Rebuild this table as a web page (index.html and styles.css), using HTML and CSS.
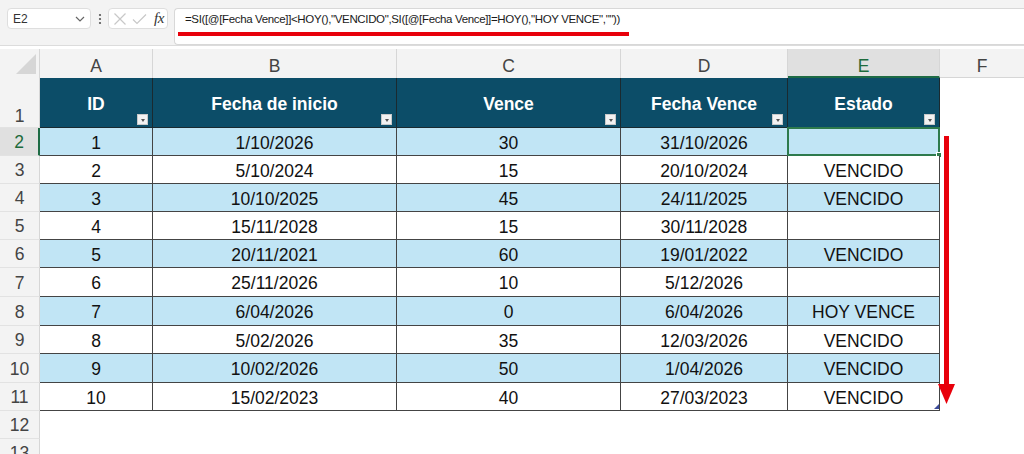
FILE: index.html
```html
<!DOCTYPE html>
<html lang="es">
<head>
<meta charset="utf-8">
<title>Hoja</title>
<link rel="stylesheet" href="styles.css">
</head>
<body>
<div class="app">
  <div class="topbar">
    <div class="namebox">
      <span class="nb-text">E2</span>
      <svg class="chev" width="10" height="6" viewBox="0 0 10 6"><path d="M1 1 L5 5 L9 1" fill="none" stroke="#666" stroke-width="1.2"/></svg>
    </div>
    <svg class="dots" width="4" height="12" viewBox="0 0 4 12"><circle cx="2" cy="2" r="1.1" fill="#555"/><circle cx="2" cy="6" r="1.1" fill="#555"/><circle cx="2" cy="10" r="1.1" fill="#555"/></svg>
    <div class="fxbox">
      <svg width="14" height="14" viewBox="0 0 14 14"><path d="M1.5 1.5 L12.5 12.5 M12.5 1.5 L1.5 12.5" stroke="#c8c8c8" stroke-width="1.2" fill="none"/></svg>
      <svg width="15" height="14" viewBox="0 0 15 14"><path d="M1 7.5 L5 11.5 L14 2.5" stroke="#c8c8c8" stroke-width="1.2" fill="none"/></svg>
      <span class="fx">fx</span>
    </div>
    <div class="formula">
      <div class="ftext">=SI([@[Fecha Vence]]&lt;HOY(),"VENCIDO",SI([@[Fecha Vence]]=HOY(),"HOY VENCE",""))</div>
      <div class="redline"></div>
    </div>
  </div>

  <div class="sheet">
    <!-- column headers -->
    <div class="corner"><svg width="22" height="22" viewBox="0 0 22 22"><path d="M21 1 L21 21 L1 21 Z" fill="#d6d6d6"/></svg></div>
    <div class="colh">A</div>
    <div class="colh">B</div>
    <div class="colh">C</div>
    <div class="colh">D</div>
    <div class="colh sel">E</div>
    <div class="colh last">F</div>

    <!-- row 1: table header -->
    <div class="rowh tall">1</div>
    <div class="th">ID<span class="filt"></span></div>
    <div class="th">Fecha de inicio<span class="filt"></span></div>
    <div class="th">Vence<span class="filt"></span></div>
    <div class="th">Fecha Vence<span class="filt"></span></div>
    <div class="th">Estado<span class="filt"></span></div>
    <div class="blank"></div>

    <div class="rowh sel">2</div>
    <div class="td band">1</div><div class="td band">1/10/2026</div><div class="td band">30</div><div class="td band">31/10/2026</div><div class="td band active"><span class="handle"></span></div><div class="blank"></div>

    <div class="rowh">3</div>
    <div class="td">2</div><div class="td">5/10/2024</div><div class="td">15</div><div class="td">20/10/2024</div><div class="td">VENCIDO</div><div class="blank"></div>

    <div class="rowh">4</div>
    <div class="td band">3</div><div class="td band">10/10/2025</div><div class="td band">45</div><div class="td band">24/11/2025</div><div class="td band">VENCIDO</div><div class="blank"></div>

    <div class="rowh">5</div>
    <div class="td">4</div><div class="td">15/11/2028</div><div class="td">15</div><div class="td">30/11/2028</div><div class="td"></div><div class="blank"></div>

    <div class="rowh">6</div>
    <div class="td band">5</div><div class="td band">20/11/2021</div><div class="td band">60</div><div class="td band">19/01/2022</div><div class="td band">VENCIDO</div><div class="blank"></div>

    <div class="rowh">7</div>
    <div class="td">6</div><div class="td">25/11/2026</div><div class="td">10</div><div class="td">5/12/2026</div><div class="td"></div><div class="blank"></div>

    <div class="rowh">8</div>
    <div class="td band">7</div><div class="td band">6/04/2026</div><div class="td band">0</div><div class="td band">6/04/2026</div><div class="td band">HOY VENCE</div><div class="blank"></div>

    <div class="rowh">9</div>
    <div class="td">8</div><div class="td">5/02/2026</div><div class="td">35</div><div class="td">12/03/2026</div><div class="td">VENCIDO</div><div class="blank"></div>

    <div class="rowh">10</div>
    <div class="td band">9</div><div class="td band">10/02/2026</div><div class="td band">50</div><div class="td band">1/04/2026</div><div class="td band">VENCIDO</div><div class="blank"></div>

    <div class="rowh">11</div>
    <div class="td">10</div><div class="td">15/02/2023</div><div class="td">40</div><div class="td">27/03/2023</div><div class="td endcell">VENCIDO<span class="resize"></span></div><div class="blank"></div>

    <div class="rowh">12</div>
    <div class="empty"></div><div class="empty"></div><div class="empty"></div><div class="empty"></div><div class="empty"></div><div class="blank"></div>

    <div class="rowh">13</div>
    <div class="empty"></div><div class="empty"></div><div class="empty"></div><div class="empty"></div><div class="empty"></div><div class="blank"></div>
  </div>

  <svg class="arrow" width="20" height="272" viewBox="0 0 20 272">
    <rect x="6" y="0" width="5" height="252" fill="#e8000b"/>
    <path d="M0 248 L17 248 L8.5 268 Z" fill="#e8000b"/>
  </svg>
</div>
</body>
</html>
```

FILE: styles.css
```css
* { box-sizing: border-box; }
html, body { margin: 0; padding: 0; }
body {
  width: 1024px;
  height: 454px;
  overflow: hidden;
  background: #ffffff;
  font-family: "Liberation Sans", Arial, sans-serif;
  color: #000;
}
.app { position: relative; width: 1024px; height: 454px; }

/* ---------- top formula bar ---------- */
.topbar {
  height: 46px;
  background: #f3f3f3;
  border-bottom: 1px solid #dcdcdc;
  display: flex;
  align-items: flex-start;
  padding: 8px 0 0 7px;
}
.namebox {
  width: 84px;
  height: 21px;
  background: #fff;
  border: 1px solid #dedede;
  border-radius: 4px;
  display: flex;
  align-items: center;
  justify-content: space-between;
  padding: 0 5px 0 5px;
  font-size: 12px;
  color: #333;
}
.chev { margin-top: 1px; }
.dots { margin: 5px 6px 0 7px; }
.fxbox {
  width: 60px;
  height: 21px;
  background: #fff;
  border: 1px solid #dedede;
  border-radius: 4px;
  display: flex;
  align-items: center;
  gap: 5px;
  padding: 0 0 0 4px;
}
.fx {
  font-family: "Liberation Serif", "Times New Roman", serif;
  font-style: italic;
  font-size: 15px;
  color: #333;
  margin-left: 2px;
  letter-spacing: -0.5px;
}
.formula {
  margin-left: 6px;
  flex: 1;
  height: 37px;
  background: #fff;
  border: 1px solid #d8d8d8;
  border-right: none;
  border-radius: 4px 0 0 4px;
  padding: 3px 0 0 3px;
}
.ftext {
  font-size: 11.5px;
  color: #1a1a1a;
  padding-left: 7px;
  line-height: 15px;
  letter-spacing: -0.35px;
  white-space: nowrap;
}
.redline {
  margin-top: 5px;
  width: 451px;
  height: 4px;
  background: #e8000b;
}

/* ---------- sheet ---------- */
.sheet {
  margin-top: 3px;
  display: grid;
  grid-template-columns: 40px 113px 244px 224px 167px 152px 1fr;
  grid-template-rows: 29px 50px 28px 28px 28px 28px 28px 29px 29px 28px 29px 28px 28px 28px;
}
.corner {
  background: #f3f3f3;
  border-right: 1px solid #d6d6d6;
  display: flex;
  align-items: flex-end;
  justify-content: flex-end;
  padding: 0 2px 3px 0;
}
.colh {
  background: #f3f3f3;
  border-right: 1px solid #d6d6d6;
  display: flex;
  align-items: center;
  justify-content: center;
  font-size: 17.5px;
  color: #444;
  padding-top: 6px;
}
.colh.sel {
  background: #e0e0e0;
  color: #1d6b3c;
  border-bottom: 2px solid #1e6b45;
  padding-top: 8px;
}
.colh.last { border-right: none; border-bottom: 1px solid #d6d6d6; }

.rowh {
  background: #f3f3f3;
  border-right: 1px solid #d6d6d6;
  border-bottom: 1px solid #e2e2e2;
  display: flex;
  align-items: flex-end;
  justify-content: center;
  padding-bottom: 2px;
  font-size: 17.5px;
  color: #444;
}
.rowh.tall { padding-bottom: 0; }
.rowh.sel {
  background: #e0e0e0;
  color: #1d6b3c;
  border-right: 2px solid #1e6b45;
}

.th {
  position: relative;
  background: #0c4d68;
  color: #fff;
  font-weight: bold;
  font-size: 17.5px;
  display: flex;
  align-items: center;
  justify-content: center;
  border-right: 1px solid #1a2a30;
  border-bottom: 1px solid #1a2a30;
  padding-top: 3px;
}
.filt {
  position: absolute;
  right: 4px;
  bottom: 2px;
  width: 11px;
  height: 11px;
  background: #f2f2f2;
  border: 1px solid #c9c9c9;
}
.filt::after {
  content: "";
  position: absolute;
  left: 2.5px;
  top: 3.5px;
  border-left: 2.5px solid transparent;
  border-right: 2.5px solid transparent;
  border-top: 3px solid #555;
}

.td {
  position: relative;
  background: #fff;
  border-right: 1px solid #444;
  border-bottom: 1px solid #444;
  display: flex;
  align-items: center;
  justify-content: center;
  font-size: 17.5px;
  color: #111;
  padding-top: 3px;
}
.td.band { background: #c1e5f5; }
.td.active {
  border: 2px solid #2e7a4c;
  margin: -1px 0 0 -1px;
}
.handle {
  position: absolute;
  right: -4px;
  bottom: -4px;
  width: 6px;
  height: 6px;
  background: #2e7a4c;
  border: 1px solid #fff;
}
.resize {
  position: absolute;
  right: 0;
  bottom: 1px;
  width: 0;
  height: 0;
  border-left: 5px solid transparent;
  border-bottom: 5px solid #3b4a9a;
}
.empty { background: #fff; }
.blank { background: #fff; }

.arrow {
  position: absolute;
  left: 938px;
  top: 136px;
}
```
